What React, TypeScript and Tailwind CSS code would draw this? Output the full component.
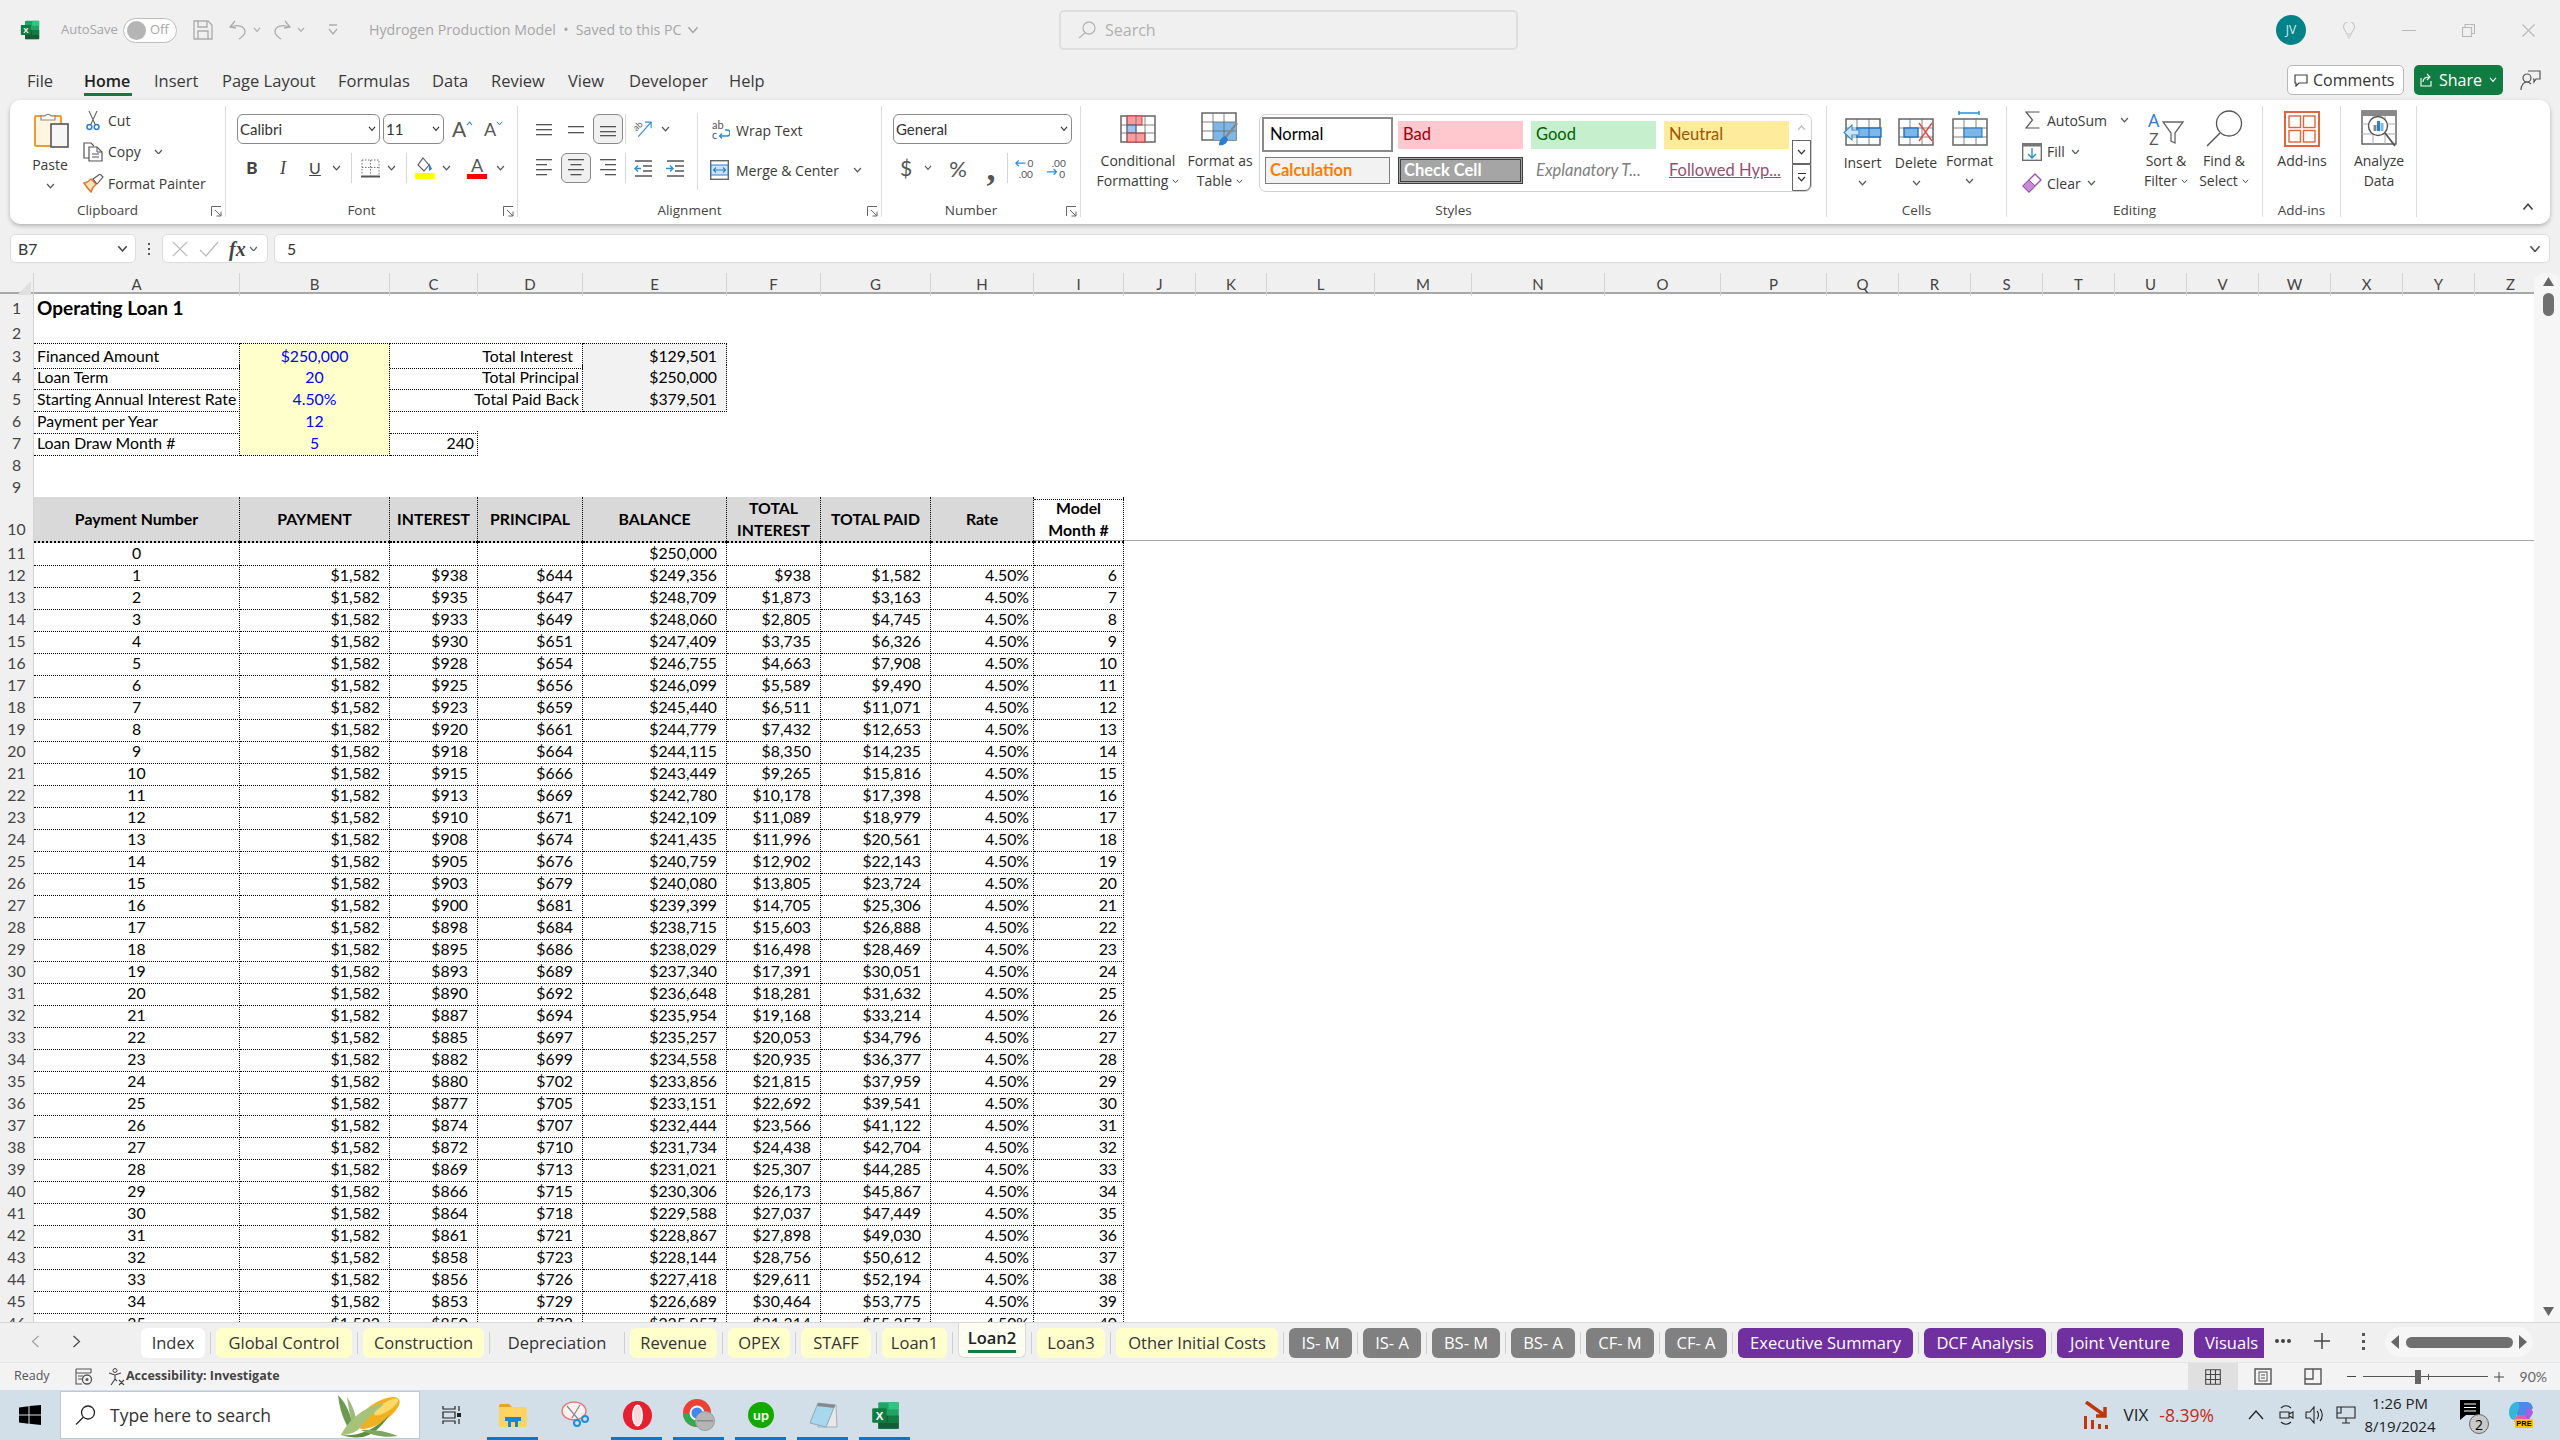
import React from "react";

const GRID = "grid grid-cols-[34px_206px_150px_88px_105px_144px_94px_110px_103px_90px_72px_71px_108px_97px_133px_116px_106px_72px_72px_72px_72px_72px_72px_72px_72px_72px_72px]";
const LETTERS = "ABCDEFGHIJKLMNOPQRSTUVWXYZ".split("");

const RAW = `938 644 249,356 938 1,582
935 647 248,709 1,873 3,163
933 649 248,060 2,805 4,745
930 651 247,409 3,735 6,326
928 654 246,755 4,663 7,908
925 656 246,099 5,589 9,490
923 659 245,440 6,511 11,071
920 661 244,779 7,432 12,653
918 664 244,115 8,350 14,235
915 666 243,449 9,265 15,816
913 669 242,780 10,178 17,398
910 671 242,109 11,089 18,979
908 674 241,435 11,996 20,561
905 676 240,759 12,902 22,143
903 679 240,080 13,805 23,724
900 681 239,399 14,705 25,306
898 684 238,715 15,603 26,888
895 686 238,029 16,498 28,469
893 689 237,340 17,391 30,051
890 692 236,648 18,281 31,632
887 694 235,954 19,168 33,214
885 697 235,257 20,053 34,796
882 699 234,558 20,935 36,377
880 702 233,856 21,815 37,959
877 705 233,151 22,692 39,541
874 707 232,444 23,566 41,122
872 710 231,734 24,438 42,704
869 713 231,021 25,307 44,285
866 715 230,306 26,173 45,867
864 718 229,588 27,037 47,449
861 721 228,867 27,898 49,030
858 723 228,144 28,756 50,612
856 726 227,418 29,611 52,194
853 729 226,689 30,464 53,775
850 732 225,957 31,314 55,357`.split("\n").map((l) => l.split(" "));

const Chev = ({ c = "#555", w = 9 }: { c?: string; w?: number }) => (
  <svg width={w} height={w * 0.65} viewBox="0 0 9 6" className="shrink-0">
    <path d="M1 1l3.5 4L8 1" fill="none" stroke={c} strokeWidth="1.3" />
  </svg>
);

const Launcher = () => (
  <svg width="11" height="11" viewBox="0 0 11 11">
    <path d="M.5 10V.5H10M4 4l6 6M10 5.5V10H5.5" fill="none" stroke="#666" strokeWidth="1" />
  </svg>
);

const Grp = ({ w, label, launcher, children }: { w: string; label: string; launcher?: boolean; children?: React.ReactNode }) => (
  <div className={`${w} h-[111px] shrink-0 border-r border-[#dcdcdc] flex flex-col`}>
    <div className="h-[98px] flex">{children}</div>
    <div className={`h-[13px] relative flex items-center justify-center text-[13.5px] text-[#444] ${launcher ? "pr-[20px]" : ""}`}>
      {label}
      {launcher && (
        <span className="absolute right-[3px] top-[2px]">
          <Launcher />
        </span>
      )}
    </div>
  </div>
);

const Lines = ({ ys, anchor, w = 16, h = 18 }: { ys: [number, number][]; anchor: "l" | "c" | "r"; w?: number; h?: number }) => (
  <svg width={w} height={h} viewBox={`0 0 ${w} ${h}`}>
    {ys.map(([y, len], i) => (
      <rect key={i} x={anchor === "l" ? 0 : anchor === "r" ? w - len : (w - len) / 2} y={y} width={len} height="1.3" fill="#555" />
    ))}
  </svg>
);

const AlignBtn = ({ active, cls, children }: { active?: boolean; cls: string; children: React.ReactNode }) => (
  <div className={`${cls} h-[30px] shrink-0 flex items-center justify-center rounded-[6px] ${active ? "bg-[#f0f0f0] border border-[#8a8a8a]" : ""}`}>{children}</div>
);

const Sep = ({ cls }: { cls: string }) => <div className={`${cls} w-px h-[30px] bg-[#d6d6d6] shrink-0`} />;

const SelectBox = ({ w, ml, text }: { w: string; ml: string; text: string }) => (
  <div className={`${w} ${ml} h-[30px] shrink-0 border border-[#8a8a8a] rounded-[6px] flex items-center justify-between pl-[2px] pr-[3px] font-['Lato',sans-serif] text-[15px] text-[#333]`}>
    <span className="whitespace-nowrap">{text}</span>
    <Chev c="#333" w={8} />
  </div>
);

const SmallRow = ({ icon, text, chev, chevCls }: { icon: React.ReactNode; text: string; chev?: boolean; chevCls?: string }) => (
  <div className="h-[28px] flex items-center">
    <div className="w-[26px] flex justify-center shrink-0">{icon}</div>
    <span className="ml-[2px]">{text}</span>
    {chev && (
      <span className={chevCls ?? "ml-[6px]"}>
        <Chev />
      </span>
    )}
  </div>
);

const BigBtn = ({ w, ml, icon, lines, chevInline, chevBelow, pt }: { w: string; ml?: string; icon: React.ReactNode; lines: string[]; chevInline?: boolean; chevBelow?: boolean; pt?: string }) => (
  <div className={`${w} ${ml ?? ""} shrink-0 flex flex-col items-center`}>
    <div className="h-[45px] flex items-center justify-center">{icon}</div>
    <div className={`${pt ?? ""} flex flex-col items-center leading-[20px] whitespace-nowrap`}>
      {lines.map((l, i) => (
        <div key={i} className="flex items-center h-[20px]">
          {l}
          {chevInline && i === lines.length - 1 && (
            <span className="ml-[4px]">
              <Chev w={7} />
            </span>
          )}
        </div>
      ))}
      {chevBelow && (
        <div className="h-[20px] flex items-center">
          <Chev />
        </div>
      )}
    </div>
  </div>
);

const StyleCell = ({ cls, children }: { cls: string; children: React.ReactNode }) => (
  <div className={`${cls} shrink-0 flex items-center font-['Lato',sans-serif] text-[16.5px] whitespace-nowrap`}>{children}</div>
);

/* ---------- icons ---------- */
const ExcelLogo = ({ s = 20 }: { s?: number }) => (
  <svg width={s} height={s} viewBox="0 0 24 24">
    <path d="M7 1h15a1 1 0 0 1 1 1v20a1 1 0 0 1-1 1H7a1 1 0 0 1-1-1V2a1 1 0 0 1 1-1z" fill="#21a366" />
    <rect x="14.5" y="1" width="8.5" height="6" fill="#33c481" />
    <rect x="14.5" y="12" width="8.5" height="6" fill="#107c41" />
    <rect x="6" y="12" width="8.5" height="6" fill="#185c37" />
    <rect x="6" y="18" width="17" height="5" fill="#185c37" />
    <rect x="1" y="6" width="12" height="12" rx="1" fill="#107c41" />
    <text x="7" y="15.5" textAnchor="middle" fontSize="9.5" fontWeight="700" fill="#fff" fontFamily="Liberation Sans, sans-serif">X</text>
  </svg>
);

const PasteIcon = () => (
  <svg width="35" height="38" viewBox="0 0 35 38">
    <rect x="1" y="5" width="26" height="30" rx="1" fill="#fff6e2" stroke="#ee9a3a" strokeWidth="2" />
    <path d="M7 9V5h4a3.5 3.5 0 0 1 6 0h4v4z" fill="#fff" stroke="#8a8a8a" strokeWidth="1.2" />
    <rect x="17" y="13" width="17" height="23" fill="#f6f6f6" stroke="#555" strokeWidth="1.6" />
  </svg>
);
const CutIcon = () => (
  <svg width="14" height="21" viewBox="0 0 14 21">
    <path d="M3 1l6 13M11 1L5 14" stroke="#666" strokeWidth="1.1" fill="none" />
    <circle cx="3.4" cy="17" r="2.4" fill="none" stroke="#2b7cd3" strokeWidth="1.5" />
    <circle cx="10.6" cy="17" r="2.4" fill="none" stroke="#2b7cd3" strokeWidth="1.5" />
  </svg>
);
const CopyIcon = () => (
  <svg width="20" height="20" viewBox="0 0 20 20">
    <path d="M6 16H1V1h7l3 3" fill="none" stroke="#555" strokeWidth="1.2" />
    <path d="M6 5h8l5 5v9H6z" fill="#fff" stroke="#555" strokeWidth="1.2" />
    <path d="M14 5v5h5M9 12h7M9 15h7" stroke="#555" fill="none" />
  </svg>
);
const PainterIcon = () => (
  <svg width="21" height="19" viewBox="0 0 21 19">
    <path d="M1 9c3 0 5-2 7-4l5 5c-2 2-4 4-5 8C5 15 3 12 1 9z" fill="#fde3c0" stroke="#e8752a" strokeWidth="1.5" />
    <path d="M10 5l7-5 3 3-6 7z" fill="#fff" stroke="#555" strokeWidth="1.1" />
  </svg>
);
const BorderIcon = () => (
  <svg width="19" height="19" viewBox="0 0 19 19">
    <path d="M1 1h17v15M1 1v15M9.5 1v15M1 8.5h17" stroke="#777" strokeWidth="1" strokeDasharray="1.5 1.5" fill="none" />
    <rect x="0" y="16.5" width="19" height="2" fill="#555" />
  </svg>
);
const FillIcon = () => (
  <svg width="20" height="22" viewBox="0 0 20 22">
    <path d="M8 1l6 7-5 6-6-6z" fill="#fff" stroke="#555" strokeWidth="1.1" />
    <path d="M14 6l3 6-3 2z" fill="#2b7cd3" />
    <rect x="0" y="16" width="20" height="6" fill="#ffff00" />
  </svg>
);
const OrientIcon = () => (
  <svg width="35" height="36" viewBox="-6 -8 35 36">
    <text x="1" y="10" fontSize="10.5" fill="#555" fontFamily="Lato, sans-serif" transform="rotate(-45 6 8)">ab</text>
    <path d="M6 19L21 2M14 2h7v7" fill="none" stroke="#2b8fd3" strokeWidth="1.3" />
  </svg>
);
const IndentIcon = ({ rev }: { rev?: boolean }) => (
  <svg width="18" height="17" viewBox="0 0 18 17">
    <path d="M1 1h17M9 6h9M9 11h9M1 16h17" stroke="#555" strokeWidth="1.3" />
    <path d={rev ? "M7 8.5H1M4 5.5l-3 3 3 3" : "M0 8.5h7M4 5.5l3 3-3 3"} fill="none" stroke="#2b8fd3" strokeWidth="1.4" />
  </svg>
);
const WrapIcon = () => (
  <svg width="18" height="30" viewBox="0 -5 18 30">
    <text x="0" y="9" fontSize="11" fill="#555" fontFamily="Lato, sans-serif">ab</text>
    <text x="0" y="19" fontSize="11" fill="#555" fontFamily="Lato, sans-serif">c</text>
    <path d="M13 10h2a3 3 0 0 1 0 6H8M10 13.5L7.5 16l2.5 2.5" fill="none" stroke="#2b8fd3" strokeWidth="1.3" />
  </svg>
);
const MergeIcon = () => (
  <svg width="19" height="20" viewBox="0 0 19 20">
    <rect x=".7" y=".7" width="17.6" height="18.6" fill="none" stroke="#666" strokeWidth="1.4" />
    <rect x="1" y="5" width="17" height="10" fill="#cfe3f6" stroke="#2b7cd3" />
    <path d="M4 10h11M6 7.5L3.5 10 6 12.5M13 7.5l2.5 2.5-2.5 2.5" fill="none" stroke="#2b7cd3" strokeWidth="1.1" />
  </svg>
);
const DecIcon = ({ inc }: { inc?: boolean }) => (
  <svg width="25" height="29" viewBox="-2 -4 25 29">
    <text x={inc ? 6 : 13} y="9" fontSize="10.5" fill="#555" fontFamily="Lato, sans-serif">{inc ? ".00" : "0"}</text>
    <text x={inc ? 14 : 4} y="20" fontSize="10.5" fill="#555" fontFamily="Lato, sans-serif">{inc ? "0" : ".00"}</text>
    <path d={inc ? "M1 14h10M8 11l3 3-3 3" : "M11 5H1M4 2L1 5l3 3"} fill="none" stroke="#2b8fd3" strokeWidth="1.3" />
  </svg>
);
const CondIcon = () => (
  <svg width="36" height="28" viewBox="0 0 36 28">
    <rect x="1" y="1" width="34" height="26" fill="#fff" stroke="#666" strokeWidth="1.5" />
    <rect x="7" y="1" width="15" height="9" fill="#ff9a9e" stroke="#d33" />
    <rect x="7" y="10" width="9" height="8" fill="#9fc5ef" stroke="#2b7cd3" />
    <rect x="7" y="18" width="18" height="9" fill="#ff9a9e" stroke="#d33" />
    <path d="M1 10h34M1 18h34M7 1v26M16 1v26M25 1v26" stroke="#666" fill="none" strokeWidth=".8" />
  </svg>
);
const FmtTableIcon = () => (
  <svg width="38" height="34" viewBox="0 0 38 34">
    <rect x="1" y="1" width="34" height="27" fill="#fff" stroke="#666" strokeWidth="1.5" />
    <rect x="12" y="10" width="23" height="18" fill="#7db7e8" />
    <path d="M1 10h34M1 19h34M12 1v27M23 1v27" stroke="#666" fill="none" strokeWidth=".8" />
    <path d="M36 11L24 26" stroke="#888" strokeWidth="2.5" />
    <path d="M24 24c-3 1-6 4-6 9 4 1 8-1 9-6z" fill="#2b7cd3" />
  </svg>
);
const CellsIcon = ({ kind }: { kind: "ins" | "del" | "fmt" }) => (
  <svg width="40" height="36" viewBox="0 0 40 36">
    {kind === "fmt" && <path d="M9 2h20M9 0v4M29 0v4" stroke="#2b8fd3" strokeWidth="1.5" />}
    <rect x="3" y="8" width="34" height="26" fill="#fff" stroke="#666" strokeWidth="1.5" />
    <path d="M3 17h34M3 26h34M14 8v26M26 8v26" stroke="#666" strokeWidth=".8" />
    {kind === "ins" && (
      <>
        <rect x="14" y="17" width="24" height="9" fill="#7db7e8" stroke="#1f6fbf" strokeWidth="1.4" />
        <path d="M26 17v9" stroke="#1f6fbf" />
        <path d="M16 19H9v-5l-8 7.500 8 7.500v-5h7z" fill="#cfe3f6" stroke="#2b8fd3" strokeWidth="1.1" />
      </>
    )}
    {kind === "del" && (
      <>
        <rect x="8" y="17" width="14" height="9" fill="#7db7e8" stroke="#1f6fbf" strokeWidth="1.4" />
        <path d="M23 12l13 18M36 12L23 30" stroke="#e04a3f" strokeWidth="1.4" />
      </>
    )}
    {kind === "fmt" && <rect x="14" y="17" width="18" height="9" fill="#7db7e8" stroke="#1f6fbf" />}
  </svg>
);
const SigmaIcon = () => (
  <svg width="15" height="18" viewBox="0 0 15 18">
    <path d="M14.500 1H1l6.500 8L1 17h13.500" fill="none" stroke="#555" strokeWidth="1.2" />
  </svg>
);
const FillDownIcon = () => (
  <svg width="20" height="18" viewBox="0 0 20 18">
    <rect x=".7" y=".7" width="18.6" height="16.6" fill="#fff" stroke="#666" strokeWidth="1.3" />
    <rect x="0" y="0" width="20" height="3.500" fill="#777" />
    <path d="M10 5v10M6 11l4 4 4-4" fill="none" stroke="#2b8fd3" strokeWidth="1.4" />
  </svg>
);
const EraserIcon = () => (
  <svg width="20" height="20" viewBox="0 0 20 20">
    <path d="M13 1l6 6-12 12-6-6z" fill="#fff" stroke="#9b4fb8" strokeWidth="1.4" />
    <path d="M7 7l6 6-6 6-6-6z" fill="#c78ad8" stroke="#9b4fb8" />
  </svg>
);
const SortIcon = () => (
  <svg width="36" height="48" viewBox="0 -7 36 48">
    <text x="0" y="15" fontSize="18" fill="#2b7cd3" fontFamily="Open Sans, sans-serif">A</text>
    <text x="1" y="33" fontSize="17" fill="#555" fontFamily="Open Sans, sans-serif">Z</text>
    <path d="M15 10h20l-8 11v10l-4-2v-8z" fill="none" stroke="#666" strokeWidth="1.3" />
  </svg>
);
const FindIcon = () => (
  <svg width="37" height="37" viewBox="0 0 37 37">
    <circle cx="23" cy="13.500" r="12.500" fill="none" stroke="#555" strokeWidth="1.3" />
    <path d="M14 23L1 36" stroke="#555" strokeWidth="1.4" />
  </svg>
);
const AddinIcon = () => (
  <svg width="36" height="36" viewBox="0 0 36 36">
    <rect x="1" y="1" width="34" height="34" fill="#fff" stroke="#e0653a" strokeWidth="2" />
    <rect x="5" y="5" width="11.500" height="11.500" fill="#fff" stroke="#e0653a" strokeWidth="1.4" />
    <rect x="19.500" y="5" width="11.500" height="11.500" fill="#fff" stroke="#e0653a" strokeWidth="1.4" />
    <rect x="5" y="19.500" width="11.500" height="11.500" fill="#fff" stroke="#e0653a" strokeWidth="1.4" />
    <rect x="19.500" y="19.500" width="11.500" height="11.500" fill="#fff" stroke="#e0653a" strokeWidth="1.4" />
  </svg>
);
const AnalyzeIcon = () => (
  <svg width="36" height="37" viewBox="0 0 36 37">
    <rect x="1" y="1" width="34" height="33" fill="#fff" stroke="#666" strokeWidth="1.5" />
    <rect x="1" y="1" width="34" height="5" fill="#888" />
    <path d="M1 14h34M1 24h34M12 6v28M24 6v28" stroke="#aaa" />
    <circle cx="17" cy="16" r="9.500" fill="#fff" stroke="#555" strokeWidth="1.4" />
    <path d="M24 23l10 13" stroke="#555" strokeWidth="1.800" />
    <rect x="12.500" y="15" width="3" height="6" fill="#888" />
    <rect x="16" y="11" width="3" height="10" fill="#2b7cd3" />
    <rect x="19.500" y="13" width="3" height="8" fill="#7db7e8" />
  </svg>
);
const Corn = () => (
  <svg width="70" height="44" viewBox="0 0 70 44">
    <path d="M4 1c6 6 12 16 14 28l-5 3C8 22 5 12 4 1z" fill="#6d9a52" />
    <path d="M13 3c4 6 8 14 9 22l-4 5c-2-10-4-18-5-27z" fill="#9dbb7d" />
    <ellipse cx="44" cy="19" rx="25" ry="10" transform="rotate(-33 44 19)" fill="#f0b020" />
    <ellipse cx="52" cy="13" rx="14" ry="4.500" transform="rotate(-33 52 13)" fill="#fcd968" />
    <path d="M7 41C14 28 28 12 50 10 38 20 30 28 24 36c-6 4-12 5-17 5z" fill="#a7c27a" />
    <path d="M7 41c14 2 34-4 48-20-8 14-18 20-26 22-8 1-16 0-22-2z" fill="#5f8f3e" />
    <path d="M27 36c12-1 24 1 37 6-12 2-26 0-37-6z" fill="#7fa65e" />
  </svg>
);

/* ---------- sheet ---------- */
const D = "border-dotted border-black";
const NUM = "flex items-center justify-end pr-[9px]";
const CTR = "flex items-center justify-center";
const LEFT = "flex items-center pl-[3px]";
const RH = ({ n, end }: { n: number; end?: boolean }) => (
  <div className={`bg-[#f0f0f0] border-b border-r border-[#d4d4d4] text-[#444] flex justify-center ${end ? "items-end pb-[1px]" : "items-center"}`}>{n}</div>
);
const HEAD = `${CTR} bg-[#d9d9d9] font-bold leading-[22px] text-center border-r-[1px] ${D} border-b-[2px] border-b-black border-b-solid`;

const TOP = [
  { n: 3, a: "Financed Amount", b: "$250,000", d: "Total Interest", e: "$129,501", dp: "pr-[9px]" },
  { n: 4, a: "Loan Term", b: "20", d: "Total Principal", e: "$250,000", dp: "pr-[3px]" },
  { n: 5, a: "Starting Annual Interest Rate", b: "4.50%", d: "Total Paid Back", e: "$379,501", dp: "pr-[3px]" },
];

const Sheet = () => (
  <div className="flex-1 min-w-0 overflow-hidden bg-white font-['Lato',sans-serif] text-[15.8px] text-black">
    <div className={`${GRID} h-[21px] bg-[#f0f0f0] border-b-2 border-[#a8a8a8] text-[15px] text-[#444]`}>
      <div className="relative border-r border-[#d4d4d4]">
        <svg width="14" height="14" viewBox="0 0 14 14" className="absolute right-[2px] bottom-[1px]">
          <path d="M14 0v14H0z" fill="#dfdfdf" />
        </svg>
      </div>
      {LETTERS.map((l) => (
        <div key={l} className={`${CTR} border-r border-[#d4d4d4] whitespace-nowrap`}>{l}</div>
      ))}
    </div>

    <div className={`${GRID} h-[27px]`}>
      <RH n={1} />
      <div className={`${LEFT} font-bold text-[19px] whitespace-nowrap`}>Operating Loan 1</div>
    </div>
    <div className={`${GRID} h-[22px]`}><RH n={2} /></div>

    {TOP.map((r) => (
      <div key={r.n} className={`${GRID} h-[22px]`}>
        <RH n={r.n} />
        <div className={`${LEFT} ${D} border-b border-r ${r.n === 3 ? "border-t" : ""} whitespace-nowrap`}>{r.a}</div>
        <div className={`${CTR} ${D} border-b border-r ${r.n === 3 ? "border-t" : ""} bg-[#ffffcc] text-[#0000ff]`}>{r.b}</div>
        <div className={`col-span-2 flex items-center justify-end ${r.dp} ${D} border-b border-r ${r.n === 3 ? "border-t" : ""}`}>{r.d}</div>
        <div className={`${NUM} ${D} border-b border-r ${r.n === 3 ? "border-t" : ""} bg-[#f2f2f2]`}>{r.e}</div>
      </div>
    ))}
    <div className={`${GRID} h-[22px]`}>
      <RH n={6} />
      <div className={`${LEFT} ${D} border-b border-r`}>Payment per Year</div>
      <div className={`${CTR} ${D} border-b border-r bg-[#ffffcc] text-[#0000ff]`}>12</div>
      <div className={`${D} border-b`} />
    </div>
    <div className={`${GRID} h-[22px]`}>
      <RH n={7} />
      <div className={`${LEFT} ${D} border-b border-r`}>Loan Draw Month #</div>
      <div className={`${CTR} ${D} border-b border-r bg-[#ffffcc] text-[#0000ff]`}>5</div>
      <div className={`flex items-center justify-end pr-[3px] ${D} border-b border-r`}>240</div>
    </div>
    <div className={`${GRID} h-[22px]`}><RH n={8} /></div>
    <div className={`${GRID} h-[22px]`}>
      <RH n={9} />
      {[0, 1, 2, 3, 4, 5, 6, 7, 8].map((i) => (
        <div key={i} className={`${D} border-b`} />
      ))}
    </div>

    <div className={`${GRID} h-[44px] border-b border-[#a8a8a8]`}>
      <RH n={10} end />
      <div className={HEAD}>Payment Number</div>
      <div className={HEAD}>PAYMENT</div>
      <div className={HEAD}>INTEREST</div>
      <div className={HEAD}>PRINCIPAL</div>
      <div className={HEAD}>BALANCE</div>
      <div className={HEAD}>TOTAL<br />INTEREST</div>
      <div className={HEAD}>TOTAL PAID</div>
      <div className={HEAD}>Rate</div>
      <div className={`${CTR} font-bold leading-[22px] text-center border-r ${D} border-b-[2px] border-b-black border-b-solid`}>Model<br />Month #</div>
    </div>

    <div className={`${GRID} h-[22px]`}>
      <RH n={11} />
      <div className={`${CTR} ${D} border-b border-r`}>0</div>
      <div className={`${D} border-b border-r`} />
      <div className={`${D} border-b border-r`} />
      <div className={`${D} border-b border-r`} />
      <div className={`${NUM} ${D} border-b border-r`}>$250,000</div>
      <div className={`${D} border-b border-r`} />
      <div className={`${D} border-b border-r`} />
      <div className={`${D} border-b border-r`} />
      <div className={`${D} border-b border-r`} />
    </div>

    {RAW.map((r, i) => (
      <div key={i} className={`${GRID} h-[22px]`}>
        <RH n={i + 12} />
        <div className={`${CTR} ${D} border-b border-r`}>{i + 1}</div>
        <div className={`${NUM} ${D} border-b border-r`}>$1,582</div>
        <div className={`${NUM} ${D} border-b border-r`}>${r[0]}</div>
        <div className={`${NUM} ${D} border-b border-r`}>${r[1]}</div>
        <div className={`${NUM} ${D} border-b border-r`}>${r[2]}</div>
        <div className={`${NUM} ${D} border-b border-r`}>${r[3]}</div>
        <div className={`${NUM} ${D} border-b border-r`}>${r[4]}</div>
        <div className={`flex items-center justify-end pr-[4px] ${D} border-b border-r`}>4.50%</div>
        <div className={`flex items-center justify-end pr-[6px] ${D} border-b border-r`}>{i + 6}</div>
      </div>
    ))}
  </div>
);

const TABS: { t: string; w: string; bg: string }[] = [
  { t: "Index", w: "w-[64px]", bg: "bg-white text-[#333]" },
  { t: "Global Control", w: "w-[136px]", bg: "bg-[#ffffcc] text-[#333]" },
  { t: "Construction", w: "w-[121px]", bg: "bg-[#ffffcc] text-[#333]" },
  { t: "Depreciation", w: "w-[124px]", bg: "text-[#333]" },
  { t: "Revenue", w: "w-[87px]", bg: "bg-[#ffffcc] text-[#333]" },
  { t: "OPEX", w: "w-[62px]", bg: "bg-[#ffffcc] text-[#333]" },
  { t: "STAFF", w: "w-[70px]", bg: "bg-[#ffffcc] text-[#333]" },
  { t: "Loan1", w: "w-[65px]", bg: "bg-[#ffffcc] text-[#333]" },
  { t: "Loan2", w: "w-[68px]", bg: "active" },
  { t: "Loan3", w: "w-[68px]", bg: "bg-[#ffffcc] text-[#333]" },
  { t: "Other Initial Costs", w: "w-[162px]", bg: "bg-[#ffffcc] text-[#333]" },
  { t: "IS- M", w: "w-[63px]", bg: "bg-[#808080] text-white" },
  { t: "IS- A", w: "w-[58px]", bg: "bg-[#808080] text-white" },
  { t: "BS- M", w: "w-[68px]", bg: "bg-[#808080] text-white" },
  { t: "BS- A", w: "w-[64px]", bg: "bg-[#808080] text-white" },
  { t: "CF- M", w: "w-[68px]", bg: "bg-[#808080] text-white" },
  { t: "CF- A", w: "w-[62px]", bg: "bg-[#808080] text-white" },
  { t: "Executive Summary", w: "w-[175px]", bg: "bg-[#7030a0] text-white" },
  { t: "DCF Analysis", w: "w-[122px]", bg: "bg-[#7030a0] text-white" },
  { t: "Joint Venture", w: "w-[126px]", bg: "bg-[#7030a0] text-white" },
];

const TaskSlot = ({ active, children }: { active?: boolean; children: React.ReactNode }) => (
  <div className="w-[62px] h-[50px] shrink-0 relative flex items-center justify-center">
    {children}
    {active && <div className="absolute bottom-0 left-[5px] right-[6px] h-[3px] bg-[#0078d4]" />}
  </div>
);

export default function App() {
  return (
    <div className="w-[2560px] h-[1440px] flex flex-col overflow-hidden bg-[#f0f0f0] font-['Open_Sans',sans-serif] text-[14px] text-[#333]">
      {/* title bar */}
      <div className="h-[60px] shrink-0 flex items-center text-[#a6a6a6]">
        <div className="ml-[20px] w-[20px] flex"><ExcelLogo /></div>
        <span className="ml-[21px] w-[62px] text-[13px] whitespace-nowrap">AutoSave</span>
        <div className="w-[54px] h-[25px] border border-[#bdbdbd] rounded-full bg-white flex items-center pl-[3px] gap-[4px]">
          <span className="w-[19px] h-[19px] rounded-full bg-[#b5b5b5]" />
          <span className="text-[13px]">Off</span>
        </div>
        <svg width="20" height="20" viewBox="0 0 20 20" className="ml-[16px]"><path d="M1 1h14l4 4v14H1zM5 1v6h9V1M5 19v-8h10v8" fill="none" stroke="#aaa" strokeWidth="1.3" /></svg>
        <svg width="18" height="20" viewBox="0 0 18 20" className="ml-[16px]"><path d="M6 1L1 7l6 1M2 7c6-3 14-1 14 5 0 3-3 5-6 7" fill="none" stroke="#aaa" strokeWidth="1.3" /></svg>
        <span className="ml-[6px]"><Chev c="#aaa" w={8} /></span>
        <svg width="18" height="20" viewBox="0 0 18 20" className="ml-[12px]"><path d="M12 1l5 6-6 1M16 7C10 4 2 6 2 12c0 3 3 5 6 7" fill="none" stroke="#aaa" strokeWidth="1.3" /></svg>
        <span className="ml-[6px]"><Chev c="#aaa" w={8} /></span>
        <svg width="12" height="12" viewBox="0 0 12 12" className="ml-[22px]"><path d="M2 1h8M2 5l4 5 4-5" fill="none" stroke="#aaa" strokeWidth="1.3" /></svg>
        <span className="ml-[30px] w-[318px] text-[14.2px] whitespace-nowrap">Hydrogen Production Model&nbsp; •&nbsp; Saved to this PC</span>
        <Chev c="#aaa" w={12} />
        <div className="ml-[360px] w-[459px] h-[40px] border-2 border-[#dedede] rounded-[5px] flex items-center pl-[17px] text-[#b0b0b0] text-[16px]">
          <svg width="18" height="18" viewBox="0 0 18 18"><circle cx="11" cy="7" r="6" fill="none" stroke="#b5b5b5" strokeWidth="1.3" /><path d="M7 12L1 17" stroke="#b5b5b5" strokeWidth="1.3" /></svg>
          <span className="ml-[9px]">Search</span>
        </div>
        <div className="ml-[758px] w-[30px] h-[30px] rounded-full bg-[#038387] text-[#d7eeee] text-[12px] flex items-center justify-center shrink-0">JV</div>
        <svg width="12" height="17" viewBox="0 0 12 17" className="ml-[37px] shrink-0"><path d="M3.500 12c0-3-3-4-3-7a5.500 5.500 0 0 1 11 0c0 3-3 4-3 7zM4 14h4M5 16h2" fill="none" stroke="#c4c4c4" strokeWidth="1.1" /></svg>
        <div className="ml-[47px] w-[14px] h-px bg-[#b8b8b8] shrink-0" />
        <svg width="13" height="13" viewBox="0 0 13 13" className="ml-[46px] shrink-0"><path d="M.5 3.500h9v9h-9zM3 3.500v-3h9.500v9h-3" fill="none" stroke="#b8b8b8" strokeWidth="1.1" /></svg>
        <svg width="13" height="13" viewBox="0 0 13 13" className="ml-[47px] shrink-0"><path d="M.5.500l12 12M12.500.500l-12 12" fill="none" stroke="#b8b8b8" strokeWidth="1.1" /></svg>
      </div>

      {/* menu */}
      <div className="h-[40px] shrink-0 flex items-center pl-[27px] text-[16.5px] text-[#3a3a3a]">
        <span className="w-[57px] pt-[2px]">File</span>
        <span className="w-[70px] pt-[2px] relative font-semibold text-[16px] text-[#222]">Home<span className="absolute left-0 top-[26px] w-[48px] h-[3px] bg-[#107c41]" /></span>
        <span className="w-[68px] pt-[2px]">Insert</span>
        <span className="w-[116px] pt-[2px]">Page Layout</span>
        <span className="w-[94px] pt-[2px]">Formulas</span>
        <span className="w-[59px] pt-[2px]">Data</span>
        <span className="w-[77px] pt-[2px]">Review</span>
        <span className="w-[61px] pt-[2px]">View</span>
        <span className="w-[100px] pt-[2px]">Developer</span>
        <span className="w-[37px] pt-[2px]">Help</span>
        <div className="ml-[1521px] w-[117px] h-[30px] border border-[#b8b8b8] rounded-[5px] bg-white flex items-center pl-[6px] gap-[5px] text-[16px] text-[#333] shrink-0 whitespace-nowrap">
          <svg width="14" height="13" viewBox="0 0 14 13"><path d="M1 1h12v8H5l-3 3V9H1z" fill="none" stroke="#444" strokeWidth="1.2" /></svg>
          Comments
        </div>
        <div className="ml-[10px] w-[89px] h-[30px] rounded-[5px] bg-[#107c41] text-white text-[16px] flex items-center pl-[6px] gap-[5px] shrink-0">
          <svg width="14" height="14" viewBox="0 0 14 14"><path d="M1 5v8h10V8M3 9c0-4 3-5 6-5M7 1l3 3-3 3" fill="none" stroke="#fff" strokeWidth="1.1" /></svg>
          Share
          <span className="ml-[2px]"><Chev c="#fff" w={8} /></span>
        </div>
        <svg width="21" height="21" viewBox="0 0 21 21" className="ml-[17px] shrink-0"><circle cx="7" cy="8" r="4" fill="none" stroke="#555" strokeWidth="1.2" /><path d="M1 20c0-5 3-8 6-8 2 0 3 1 4 2M8 1h12v8h-4l-2 3V9h-1" fill="none" stroke="#555" strokeWidth="1.2" /></svg>
      </div>

      {/* ribbon */}
      <div className="mx-[10px] w-[2540px] h-[124px] shrink-0 bg-white rounded-[10px] shadow-[0_2px_4px_rgba(0,0,0,0.25)] flex pt-[6px] text-[14px] text-[#3a3a3a]">
        <Grp w="w-[216px]" label="Clipboard" launcher>
          <div className="ml-[10px] w-[60px] flex flex-col items-center">
            <div className="h-[43px] flex items-end pl-[2px]"><PasteIcon /></div>
            <div className="h-[26px] flex items-end">Paste</div>
            <div className="h-[22px] flex items-center"><Chev /></div>
          </div>
          <div className="flex flex-col gap-[3.5px] whitespace-nowrap">
            <SmallRow icon={<CutIcon />} text="Cut" />
            <SmallRow icon={<CopyIcon />} text="Copy" chev chevCls="ml-[13px]" />
            <SmallRow icon={<PainterIcon />} text="Format Painter" />
          </div>
        </Grp>

        <Grp w="w-[292px]" label="Font" launcher>
          <div className="flex flex-col">
            <div className="mt-[8px] h-[30px] flex items-center">
              <SelectBox w="w-[143px]" ml="ml-[11px]" text="Calibri" />
              <SelectBox w="w-[61px]" ml="ml-[3px]" text="11" />
              <div className="ml-[8px] w-[24px] h-[28px] flex items-center font-['Lato',sans-serif] text-[21px] text-[#555]">A<span className="mb-[12px]"><svg width="7" height="5" viewBox="0 0 7 5"><path d="M1 4l2.500-3L6 4" fill="none" stroke="#2b7cd3" strokeWidth="1.100" /></svg></span></div>
              <div className="ml-[8px] w-[24px] h-[28px] flex items-center font-['Lato',sans-serif] text-[18px] text-[#555]">A<span className="mb-[12px]"><Chev c="#2b7cd3" w={7} /></span></div>
            </div>
            <div className="mt-[9px] h-[30px] flex items-center font-['Liberation_Serif',serif] text-[#444]">
              <span className="ml-[14px] w-[24px] text-center font-['Lato',sans-serif] font-black text-[17px]">B</span>
              <span className="ml-[7px] w-[24px] text-center italic text-[18px]">I</span>
              <span className="ml-[8px] w-[24px] text-center font-['Lato',sans-serif] text-[16px] underline">U</span>
              <span className="ml-[5px] w-[13px]"><Chev /></span>
              <Sep cls="ml-[6px]" />
              <span className="ml-[9px]"><BorderIcon /></span>
              <span className="ml-[7px] w-[13px]"><Chev /></span>
              <Sep cls="ml-[6px]" />
              <span className="ml-[8px]"><FillIcon /></span>
              <span className="ml-[7px] w-[13px]"><Chev /></span>
              <span className="ml-[12px] flex flex-col items-center w-[20px] font-['Lato',sans-serif] text-[18px] leading-[17px] text-[#555]">A<span className="w-[20px] h-[5px] bg-[#ff0000]" /></span>
              <span className="ml-[9px] w-[13px]"><Chev /></span>
            </div>
          </div>
        </Grp>

        <Grp w="w-[364px]" label="Alignment" launcher>
          <div className="w-[180px] h-[77px] mt-[7px] border-r border-[#dcdcdc] flex flex-col shrink-0">
            <div className="mt-[1px] h-[30px] flex items-center">
              <AlignBtn cls="ml-[11px] w-[30px]"><Lines ys={[[1, 16], [6, 16], [11, 16]]} anchor="l" h={13} /></AlignBtn>
              <AlignBtn cls="ml-[2px] w-[30px]"><Lines ys={[[3, 16], [9, 16]]} anchor="l" h={13} /></AlignBtn>
              <AlignBtn cls="ml-[2px] w-[30px]" active><Lines ys={[[6, 16], [11, 16], [15, 16]]} anchor="l" /></AlignBtn>
              <Sep cls="ml-[2px]" />
              <span className="ml-[2px] w-[30px] h-[30px] flex items-center justify-center"><OrientIcon /></span>
              <span className="ml-[3px]"><Chev /></span>
            </div>
            <div className="mt-[9px] h-[30px] flex items-center">
              <AlignBtn cls="ml-[11px] w-[30px]"><Lines ys={[[0, 16], [5, 11], [10, 16], [15, 11]]} anchor="l" /></AlignBtn>
              <AlignBtn cls="ml-[2px] w-[30px]" active><Lines ys={[[0, 16], [5, 11], [10, 16], [15, 11]]} anchor="c" /></AlignBtn>
              <AlignBtn cls="ml-[2px] w-[30px]"><Lines ys={[[0, 16], [5, 11], [10, 16], [15, 11]]} anchor="r" /></AlignBtn>
              <Sep cls="ml-[2px]" />
              <span className="ml-[2px] w-[30px] flex justify-center"><IndentIcon rev /></span>
              <span className="ml-[2px] w-[30px] flex justify-center"><IndentIcon /></span>
            </div>
          </div>
          <div className="flex flex-col mt-[6px] whitespace-nowrap">
            <div className="h-[36px] flex items-center pl-[14px]"><WrapIcon /><span className="ml-[6px]">Wrap Text</span></div>
            <div className="mt-[4px] h-[36px] flex items-center pl-[12px]"><MergeIcon /><span className="ml-[7px]">Merge &amp; Center</span><span className="ml-[14px]"><Chev /></span></div>
          </div>
        </Grp>

        <Grp w="w-[199px]" label="Number" launcher>
          <div className="flex flex-col">
            <div className="mt-[8px] h-[30px] flex"><SelectBox w="w-[179px]" ml="ml-[11px]" text="General" /></div>
            <div className="mt-[9px] h-[30px] flex items-center font-['Lato',sans-serif] text-[#555]">
              <span className="ml-[12px] w-[24px] text-center text-[21px]">$</span>
              <span className="ml-[6px] w-[13px]"><Chev w={8} /></span>
              <span className="ml-[4px] w-[34px] text-center text-[22px]">%</span>
              <span className="ml-[4px] w-[24px] h-[30px] flex justify-center items-center font-['Liberation_Serif',serif] text-[36px] font-bold leading-[30px]">,</span>
              <Sep cls="ml-[4px]" />
              <span className="ml-[5px] w-[24px] h-[30px] flex items-center justify-center"><DecIcon /></span>
              <span className="ml-[7px] w-[24px] h-[30px] flex items-center justify-center"><DecIcon inc /></span>
            </div>
          </div>
        </Grp>

        <Grp w="w-[746px]" label="Styles">
          <BigBtn w="w-[82px]" ml="ml-[16px]" icon={<CondIcon />} lines={["Conditional", "Formatting"]} chevInline />
          <BigBtn w="w-[78px]" ml="ml-[2px]" icon={<FmtTableIcon />} lines={["Format as", "Table"]} chevInline />
          <div className="mt-[8px] w-[553px] h-[78px] shrink-0 border border-[#d0d0d0] rounded-[7px] flex">
            <div className="w-[533px] flex flex-col">
              <div className="mt-[2px] h-[35px] flex items-center">
                <StyleCell cls="ml-[2px] w-[131px] h-[35px] pl-[6px] bg-white border-2 border-[#8a8a8a] text-black">Normal</StyleCell>
                <StyleCell cls="ml-[5px] w-[125px] h-[28px] pl-[5px] bg-[#ffc7ce] text-[#9c0006]">Bad</StyleCell>
                <StyleCell cls="ml-[8px] w-[125px] h-[28px] pl-[5px] bg-[#c6efce] text-[#006100]">Good</StyleCell>
                <StyleCell cls="ml-[8px] w-[125px] h-[28px] pl-[5px] bg-[#ffeb9c] text-[#9c5700]">Neutral</StyleCell>
              </div>
              <div className="mt-[5px] h-[27px] flex items-center">
                <StyleCell cls="ml-[5px] w-[125px] h-[27px] pl-[4px] bg-[#f2f2f2] border border-[#7f7f7f] font-bold text-[#fa7d00]">Calculation</StyleCell>
                <StyleCell cls="ml-[8px] w-[125px] h-[27px] pl-[3px] bg-[#a5a5a5] border-[3px] border-double border-[#3f3f3f] font-bold text-white">Check Cell</StyleCell>
                <StyleCell cls="ml-[8px] w-[125px] h-[27px] pl-[5px] italic text-[#7f7f7f]">Explanatory T...</StyleCell>
                <StyleCell cls="ml-[8px] w-[125px] h-[27px] pl-[5px] text-[#954f72] underline">Followed Hyp...</StyleCell>
              </div>
            </div>
            <div className="w-[19px] flex flex-col items-center">
              <div className="h-[25px] flex items-center justify-center w-full"><span className="rotate-180"><Chev c="#bbb" /></span></div>
              <div className="h-[24px] flex items-center justify-center w-full border border-[#666]"><Chev c="#333" /></div>
              <div className="h-[27px] flex flex-col items-center justify-center w-full border border-[#666] rounded-br-[6px]">
                <div className="w-[8px] h-px bg-[#333] mb-[2px]" />
                <Chev c="#333" />
              </div>
            </div>
          </div>
        </Grp>

        <Grp w="w-[180px]" label="Cells">
          <BigBtn w="w-[53px]" ml="ml-[9px]" icon={<CellsIcon kind="ins" />} lines={["Insert"]} chevBelow pt="pt-[2px]" />
          <BigBtn w="w-[54px]" icon={<CellsIcon kind="del" />} lines={["Delete"]} chevBelow pt="pt-[2px]" />
          <BigBtn w="w-[53px]" icon={<CellsIcon kind="fmt" />} lines={["Format"]} chevBelow />
        </Grp>

        <Grp w="w-[256px]" label="Editing">
          <div className="ml-[12px] w-[118px] flex flex-col gap-[3.5px] whitespace-nowrap shrink-0">
            <SmallRow icon={<SigmaIcon />} text="AutoSum" chev chevCls="ml-[13px]" />
            <SmallRow icon={<FillDownIcon />} text="Fill" chev />
            <SmallRow icon={<EraserIcon />} text="Clear" chev />
          </div>
          <BigBtn w="w-[58px]" icon={<SortIcon />} lines={["Sort &", "Filter"]} chevInline />
          <BigBtn w="w-[58px]" icon={<FindIcon />} lines={["Find &", "Select"]} chevInline />
        </Grp>

        <Grp w="w-[78px]" label="Add-ins">
          <BigBtn w="w-[78px]" icon={<AddinIcon />} lines={["Add-ins"]} />
        </Grp>
        <Grp w="w-[76px]" label="">
          <BigBtn w="w-[76px]" icon={<AnalyzeIcon />} lines={["Analyze", "Data"]} />
        </Grp>
        <div className="flex-1 flex items-end justify-end pr-[16px] pb-[13px]">
          <span className="rotate-180"><Chev c="#444" w={12} /></span>
        </div>
      </div>

      {/* formula bar */}
      <div className="mt-[10px] mx-[10px] h-[29px] shrink-0 flex items-center text-[#333]">
        <div className="w-[126px] h-[29px] bg-white border border-[#dcdcdc] rounded-[5px] flex items-center justify-between pl-[7px] pr-[7px] font-['Lato',sans-serif] text-[15.800px]">
          B7 <Chev c="#444" w={11} />
        </div>
        <div className="w-[26px] flex flex-col items-center gap-[3px]">
          <span className="w-[2px] h-[2px] bg-[#555]" /><span className="w-[2px] h-[2px] bg-[#555]" /><span className="w-[2px] h-[2px] bg-[#555]" />
        </div>
        <div className="w-[106px] h-[29px] bg-white border border-[#dcdcdc] rounded-[5px] flex items-center pl-[8px]">
          <svg width="18" height="16" viewBox="0 0 18 16"><path d="M2 1l14 14M16 1L2 15" stroke="#bbb" strokeWidth="1.2" /></svg>
          <svg width="20" height="16" viewBox="0 0 20 16" className="ml-[10px]"><path d="M1 9l6 6L19 1" fill="none" stroke="#bbb" strokeWidth="1.2" /></svg>
          <span className="ml-[10px] font-['Liberation_Serif',serif] italic text-[20px] font-semibold text-[#444] leading-none">fx</span>
          <span className="ml-[3px]"><Chev c="#666" /></span>
        </div>
        <div className="ml-[6px] w-[2276px] h-[29px] bg-white border border-[#dcdcdc] rounded-[5px] flex items-center justify-between pl-[12px] pr-[8px] font-['Lato',sans-serif] text-[15.800px]">
          5 <Chev c="#555" w={12} />
        </div>
      </div>

      {/* sheet */}
      <div className="mt-[10px] flex-1 min-h-0 flex border-b border-[#d8d8d8]">
        <Sheet />
        <div className="w-[26px] shrink-0 bg-[#f6f6f6] rounded-t-[10px] flex flex-col items-center justify-between pt-[4px] pb-[3px] pl-[2px]">
          <div className="flex flex-col items-center gap-[7px]">
            <svg width="11" height="9" viewBox="0 0 11 9"><path d="M5.500 0L11 9H0z" fill="#666" /></svg>
            <div className="w-[11px] h-[23px] rounded-full bg-[#707070]" />
          </div>
          <svg width="11" height="9" viewBox="0 0 11 9" className="mb-[3px]"><path d="M0 0h11L5.500 9z" fill="#666" /></svg>
        </div>
      </div>

      {/* tabs */}
      <div className="h-[39px] shrink-0 flex text-[16.500px]">
        <div className="w-[141px] flex items-start pt-[12px] shrink-0">
          <svg width="9" height="13" viewBox="0 0 9 13" className="ml-[31px]"><path d="M7.500 1L1.500 6.500l6 5.500" fill="none" stroke="#a0a0a0" strokeWidth="1.2" /></svg>
          <svg width="9" height="13" viewBox="0 0 9 13" className="ml-[32px]"><path d="M1.500 1l6 5.500-6 5.500" fill="none" stroke="#444" strokeWidth="1.2" /></svg>
        </div>
        {TABS.map((t, i) => (
          <React.Fragment key={t.t}>
            {i > 0 && <div className="mx-[5px] mt-[9px] w-px h-[22px] bg-[#cfcfcf] shrink-0" />}
            {t.bg === "active" ? (
              <div className={`${t.w} h-[35px] shrink-0 bg-[#fdfdf2] rounded-b-[6px] border border-t-0 border-[#d8d8d8] flex flex-col items-center font-semibold text-[#222] pt-[4px] leading-[22px]`}>
                {t.t}
                <span className="w-[48px] h-[3px] bg-[#107c41] mt-[1px]" />
              </div>
            ) : (
              <div className={`${t.w} ${t.bg} mt-[5px] h-[30px] shrink-0 rounded-[6px] flex items-center justify-center whitespace-nowrap`}>{t.t}</div>
            )}
          </React.Fragment>
        ))}
        <div className="ml-[11px] mt-[5px] w-[70px] h-[30px] shrink-0 rounded-l-[6px] bg-[#7030a0] text-white flex items-center pl-[11px]">Visuals</div>
        <div className="ml-[11px] mt-[16px] flex gap-[2px] shrink-0 h-[4px]">
          <span className="w-[4px] h-[4px] rounded-full bg-[#444]" /><span className="w-[4px] h-[4px] rounded-full bg-[#444]" /><span className="w-[4px] h-[4px] rounded-full bg-[#444]" />
        </div>
        <svg width="20" height="20" viewBox="0 0 20 20" className="ml-[21px] mt-[8px] shrink-0"><path d="M10 2v16M2 10h16" stroke="#444" strokeWidth="1.5" /></svg>
        <div className="ml-[30px] mt-[10px] flex flex-col gap-[4px] shrink-0">
          <span className="w-[3px] h-[3px] bg-[#555]" /><span className="w-[3px] h-[3px] bg-[#555]" /><span className="w-[3px] h-[3px] bg-[#555]" />
        </div>
        <div className="ml-[20px] mt-[4px] w-[148px] h-[30px] shrink-0 rounded-full bg-[#f6f6f6] flex items-center px-[6px] justify-between">
          <svg width="8" height="14" viewBox="0 0 8 14"><path d="M8 0v14L0 7z" fill="#666" /></svg>
          <div className="w-[107px] h-[11px] rounded-full bg-[#707070]" />
          <svg width="8" height="14" viewBox="0 0 8 14"><path d="M0 0v14l8-7z" fill="#666" /></svg>
        </div>
      </div>

      {/* status bar */}
      <div className="h-[28px] shrink-0 bg-[#f3f3f3] border-t border-[#e6e6e6] flex items-center text-[12.500px] text-[#555]">
        <span className="ml-[14px] w-[61px]">Ready</span>
        <svg width="18" height="17" viewBox="0 0 18 17"><path d="M1 1h15v4M1 1v15h6M1 5h15M3 8h5M3 11h4" fill="none" stroke="#555" strokeWidth="1.1" /><circle cx="12" cy="11.500" r="4.500" fill="none" stroke="#555" strokeWidth="1.3" /><circle cx="12" cy="11.500" r="1.500" fill="#555" /></svg>
        <svg width="18" height="18" viewBox="0 0 18 18" className="ml-[14px]"><circle cx="8" cy="2.500" r="2" fill="none" stroke="#444" /><path d="M2 5l6 2 6-2M8 7v4l-4 6M8 11l2 2M12 12l5 5M17 12l-5 5" fill="none" stroke="#444" strokeWidth="1.1" /></svg>
        <span className="ml-[1px] font-bold text-[#444] whitespace-nowrap">Accessibility: Investigate</span>
        <div className="flex-1" />
        <div className="w-[50px] h-[27px] bg-[#e0e0e0] flex items-center justify-center shrink-0">
          <svg width="16" height="16" viewBox="0 0 16 16"><path d="M.7.700h14.600v14.600H.7zM5.500.700v14.600M10.500.700v14.600M.7 5.500h14.600M.7 10.500h14.600" fill="none" stroke="#444" strokeWidth="1.1" /></svg>
        </div>
        <svg width="18" height="17" viewBox="0 0 18 17" className="ml-[16px] shrink-0"><path d="M1 1h16v15H1z" fill="none" stroke="#555" strokeWidth="1.400" /><rect x="5" y="4" width="8" height="9" fill="none" stroke="#555" /><path d="M7 7h4M7 10h4" stroke="#555" /></svg>
        <svg width="18" height="17" viewBox="0 0 18 17" className="ml-[32px] shrink-0"><path d="M1 1h16v15H1zM1 11h8V1" fill="none" stroke="#555" strokeWidth="1.400" /></svg>
        <div className="ml-[25px] w-[9px] h-px bg-[#444] shrink-0" />
        <div className="ml-[7px] w-[125px] h-px bg-[#555] flex items-center shrink-0">
          <span className="ml-[52px] w-[6px] h-[14px] bg-[#666]" />
          <span className="ml-[7px] w-px h-[6px] bg-[#555]" />
        </div>
        <svg width="10" height="10" viewBox="0 0 10 10" className="ml-[6px] shrink-0"><path d="M5 0v10M0 5h10" stroke="#444" /></svg>
        <span className="ml-[16px] mr-[13px] text-[#666] whitespace-nowrap font-['Lato',sans-serif] text-[14px]">90%</span>
      </div>

      {/* taskbar */}
      <div className="h-[50px] shrink-0 bg-[#d2dfe9] flex items-center text-[#222]">
        <svg width="22" height="20" viewBox="0 0 22 20" className="ml-[19px] shrink-0"><path d="M0 2.500l9.500-1.300v8.300H0zM10.500 1L22 0v9.500H10.500zM0 10.500h9.500v8.300L0 17.500zM10.500 10.500H22V20l-11.500-1.200z" fill="#000" /></svg>
        <div className="ml-[19px] w-[360px] h-[48px] bg-white border border-[#bcc8d2] flex items-center shrink-0 pl-[14px] text-[17.500px] relative">
          <svg width="21" height="20" viewBox="0 0 21 20"><circle cx="13" cy="7.500" r="6.500" fill="none" stroke="#222" strokeWidth="1.3" /><path d="M8 12.500L1 19.500" stroke="#222" strokeWidth="1.3" /></svg>
          <span className="ml-[14px] text-[#333]">Type here to search</span>
          <span className="absolute right-[15px] top-[2px]"><Corn /></span>
        </div>
        <TaskSlot><svg width="19" height="20" viewBox="0 0 19 20"><path d="M1 1v3h12V1M1 19v-3h12v3M1 7h12v6H1zM17 1v5M17 14v5" fill="none" stroke="#222" strokeWidth="1.200" /><rect x="15" y="8" width="4" height="4" fill="#222" /></svg></TaskSlot>
        <TaskSlot active><svg width="28" height="24" viewBox="0 0 28 24"><path d="M0 3a2 2 0 0 1 2-2h8l3 3h13a2 2 0 0 1 2 2v16a2 2 0 0 1-2 2H2a2 2 0 0 1-2-2z" fill="#fbd462" /><path d="M0 3a2 2 0 0 1 2-2h8l3 3H0z" fill="#e2a72a" /><path d="M6 14h16v4h-3v6h-3v-5h-4v5H9v-6H6z" fill="#1a84d8" /></svg></TaskSlot>
        <TaskSlot><svg width="28" height="28" viewBox="0 0 28 28"><ellipse cx="13" cy="10" rx="12" ry="9" fill="#fdf1f0" stroke="#e57c7c" strokeWidth="1.400" /><path d="M6 5l11 13M19 4L11 17" stroke="#888" strokeWidth="1.200" /><circle cx="16" cy="22" r="3" fill="none" stroke="#1f8fd8" strokeWidth="2" /><circle cx="24" cy="18" r="3" fill="none" stroke="#1f8fd8" strokeWidth="2" /></svg></TaskSlot>
        <TaskSlot active><svg width="29" height="29" viewBox="0 0 29 29"><ellipse cx="14.500" cy="14.500" rx="14.500" ry="14.500" fill="#e5212f" /><ellipse cx="14.500" cy="14.500" rx="5.500" ry="11" fill="#fff" /><ellipse cx="14.500" cy="14.500" rx="4" ry="10" fill="#f5d9dc" /></svg></TaskSlot>
        <TaskSlot active><svg width="32" height="32" viewBox="0 0 32 32"><circle cx="14" cy="14" r="14" fill="#ea4335" /><path d="M14 14L2 21a14 14 0 0 0 17 6z" fill="#34a853" /><path d="M14 14H28A14 14 0 0 1 20 27z" fill="#fbbc05" /><path d="M0 14a14 14 0 0 0 3 9l9-8z" fill="#34a853" /><circle cx="14" cy="14" r="6.500" fill="#4285f4" stroke="#fff" strokeWidth="1.800" /><circle cx="22" cy="22" r="9.500" fill="#b5b5b5" stroke="#999" /><rect x="14" y="21" width="16" height="1.500" fill="#8c8c8c" /></svg></TaskSlot>
        <TaskSlot active><div className="w-[26px] h-[26px] rounded-full bg-[#14a800] text-white text-[14px] font-bold flex items-center justify-center font-['Lato',sans-serif] leading-none">up</div></TaskSlot>
        <TaskSlot active><svg width="29" height="26" viewBox="0 0 29 26"><path d="M10 2l17 1 1 22H9z" fill="#e8e8e8" stroke="#aab" /><path d="M9 1l17 2-9 22-16-4z" fill="#a9d8ee" stroke="#8ab" /><path d="M9 1l17 2-1 3L8 4z" fill="#888" /></svg></TaskSlot>
        <TaskSlot active><ExcelLogo s={29} /></TaskSlot>
        <div className="flex-1" />
        <svg width="30" height="28" viewBox="0 0 30 28" className="shrink-0"><path d="M3 1l18 13M22 6v9h-9" fill="none" stroke="#c0360c" strokeWidth="3.500" /><rect x="1" y="15" width="3" height="13" fill="#c0360c" /><rect x="8" y="19" width="3" height="9" fill="#c0360c" /><rect x="15" y="23" width="3" height="5" fill="#c0360c" /><rect x="22" y="24" width="3" height="4" fill="#c0360c" /></svg>
        <span className="ml-[11px] text-[17px] text-[#222] whitespace-nowrap">VIX</span>
        <span className="ml-[11px] text-[17.500px] text-[#c42b1c] whitespace-nowrap">-8.39%</span>
        <svg width="16" height="10" viewBox="0 0 16 10" className="ml-[34px] shrink-0"><path d="M1 9l7-8 7 8" fill="none" stroke="#222" strokeWidth="1.3" /></svg>
        <svg width="15" height="20" viewBox="0 0 15 20" className="ml-[15px] shrink-0"><path d="M2 3c3-3 7-3 10 0M2 17c3 3 7 3 10 0M1 7h9v6H1zM10 9l4-2v6l-4-2" fill="none" stroke="#222" strokeWidth="1.100" /></svg>
        <svg width="20" height="18" viewBox="0 0 20 18" className="ml-[11px] shrink-0"><path d="M1 6h4l4-5v16l-4-5H1zM12 5c2 2 2 6 0 8M15 3c3 3 3 9 0 12" fill="none" stroke="#222" strokeWidth="1.100" /></svg>
        <svg width="20" height="18" viewBox="0 0 20 18" className="ml-[11px] shrink-0"><path d="M5 1h14v11H1V1h4v6H1M10 12v5M6 17h8" fill="none" stroke="#222" strokeWidth="1.100" /></svg>
        <div className="ml-[8px] w-[72px] flex flex-col items-center text-[15px] text-[#222] leading-[23px] whitespace-nowrap shrink-0">
          <span>1:26 PM</span>
          <span>8/19/2024</span>
        </div>
        <div className="ml-[24px] w-[24px] h-[30px] relative shrink-0">
          <svg width="20" height="20" viewBox="0 0 20 20"><path d="M0 0h20v15H6l-6 5z" fill="#000" /><path d="M4 4h12M4 7.500h12M4 11h12" stroke="#fff" strokeWidth="1.200" /></svg>
          <span className="absolute right-[-5px] bottom-[-4px] w-[20px] h-[20px] rounded-full bg-[#c8c8c8] border border-[#666] text-[14px] flex items-center justify-center text-black">2</span>
        </div>
        <div className="ml-[24px] mr-[26px] relative shrink-0 w-[26px] h-[26px]">
          <svg width="26" height="20" viewBox="0 0 26 20"><path d="M8 0h11c3 0 5 2 6 6l-6 7H9z" fill="#4a8be8" /><path d="M1 10c0-5 3-9 7-10 3 0 4 3 3 6L7 18c-4 0-6-3-6-8z" fill="#34b8d8" /><path d="M9 13h10l-2 4c-1 2-3 3-5 3H6z" fill="#e85d9e" /><path d="M19 6c3 0 6 2 6 5l-3 5c-1 2-3 3-5 1z" fill="#b05ae0" /></svg>
          <span className="absolute left-[7px] bottom-0 w-[18px] h-[9px] rounded-[1px] bg-[#ffc000] text-[7.500px] leading-[9px] font-bold text-center text-black font-['Liberation_Sans',sans-serif]">PRE</span>
        </div>
      </div>
    </div>
  );
}
